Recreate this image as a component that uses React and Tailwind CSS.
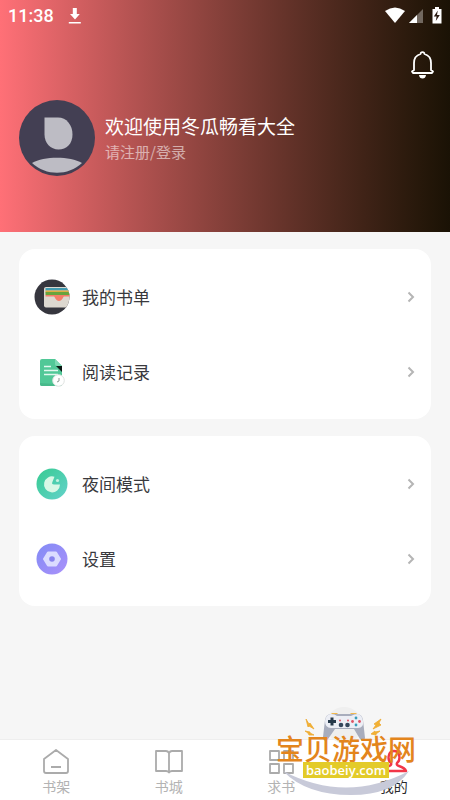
import React from "react";

function StatusBar() {
  return (
    <div className="flex h-8 items-center justify-between pl-2 pr-2">
      <div className="flex items-center gap-3.5">
        <span className="font-[Roboto,sans-serif] text-lg font-medium leading-8">11:38</span>
        <svg width="14" height="18" viewBox="0 0 14 18" fill="#fff" aria-hidden="true">
          <path d="M4.800 1h4v6h3L7 12.500 2 7h2.800zM.8 15h12v1.500H.8z" />
        </svg>
      </div>
      <svg width="57" height="18" viewBox="0 0 57 18" aria-hidden="true">
        <path d="M0 4Q10-3 20 4L10 16z" fill="#fff" />
        <path d="M38 2v14H24z" fill="#fff" opacity=".35" />
        <path d="M32 8v8h-8z" fill="#fff" />
        <path d="M50 0h4v2h2.500v14.500h-9V2H50z" fill="#fff" />
        <path d="M52.800 3.500l-4 6h2.800l-.8 4.500 4-6h-2.800z" fill="#2a1b12" />
      </svg>
    </div>
  );
}

function Avatar() {
  return (
    <svg className="shrink-0" width="76" height="76" viewBox="0 0 76 76" aria-hidden="true">
      <circle cx="38" cy="38" r="38" fill="#433f53" />
      <path d="M25.500 17.500H39C47.500 17.500 53.500 25 53.500 34.500S47.500 49.500 39.500 49.500 25.500 43 25.500 34.500z" fill="#bdbcc4" />
      <path d="M13 63C25 56 51 56 63 63 49 76 27 76 13 63z" fill="#bdbcc4" />
    </svg>
  );
}

function BooklistIcon() {
  return (
    <svg width="36" height="36" viewBox="0 0 36 36" aria-hidden="true">
      <defs>
        <clipPath id="disc"><circle cx="18" cy="18" r="17.500" /></clipPath>
      </defs>
      <circle cx="18" cy="18" r="17.500" fill="#36363e" />
      <g clipPath="url(#disc)">
        <rect x="10" y="8" width="30" height="20.500" rx="2" fill="#ddd8d0" />
        <rect x="11.500" y="9" width="28" height="2.500" fill="#439bb0" />
        <rect x="11.500" y="11.500" width="28" height="2" fill="#dfac43" />
        <rect x="11.500" y="13" width="28" height="3" fill="#67a43d" />
        <path d="M11.500 16h28v1.500H30c-1 0-1.500 4.500-5 4.500s-4-4.500-5-4.500h-8.500z" fill="#f47d68" />
      </g>
    </svg>
  );
}

function HistoryIcon() {
  return (
    <svg width="36" height="36" viewBox="0 0 36 36" aria-hidden="true">
      <path d="M8 5h13l7 7v20H8a2 2 0 0 1-2-2V7a2 2 0 0 1 2-2z" fill="#51c897" />
      <path d="M6 29v1a2 2 0 0 0 2 2h12v-2z" fill="#48b98b" />
      <path d="M22 12h6v6z" fill="#0b1914" />
      <path d="M21 5l7 7h-5a2 2 0 0 1-2-2z" fill="#7dd9b3" />
      <path d="M10 12.500h7M10 16.500h14M10 20.500h14" stroke="#e2f8ef" strokeWidth="1.500" />
      <circle cx="24.500" cy="26.500" r="5.800" fill="#fff" stroke="#dfe3e1" />
      <path d="M25 24v3l-2 1" stroke="#8e9792" fill="none" />
    </svg>
  );
}

function NightIcon() {
  return (
    <svg width="36" height="36" viewBox="0 0 36 36" aria-hidden="true">
      <defs>
        <linearGradient id="night" x2="1" y2="1">
          <stop stopColor="#36cb91" />
          <stop offset="1" stopColor="#64d2cb" />
        </linearGradient>
      </defs>
      <circle cx="18" cy="18" r="15.500" fill="url(#night)" />
      <path d="M20.500 10.800A8 8 0 1 0 26 18.500H20q-2.500 0-1.700-2.200z" fill="#d9f8e6" />
      <circle cx="23.500" cy="14.500" r="1.600" fill="#c3f1df" />
    </svg>
  );
}

function SettingsIcon() {
  return (
    <svg width="36" height="36" viewBox="0 0 36 36" aria-hidden="true">
      <defs>
        <linearGradient id="settings" x2="1" y2="1">
          <stop stopColor="#828bf5" />
          <stop offset="1" stopColor="#aa91fa" />
        </linearGradient>
      </defs>
      <circle cx="18" cy="18" r="15.500" fill="url(#settings)" />
      <path d="M14 11.500h8l4 6.500-4 6.500h-8L10 18z" fill="#dbdcff" stroke="#dbdcff" strokeWidth="2" strokeLinejoin="round" />
      <circle cx="18" cy="18" r="2.800" fill="#8883ee" />
    </svg>
  );
}

function Row({ icon, label }) {
  return (
    <button type="button" className="flex h-[75px] w-full items-center px-[15px] text-left">
      {icon}
      <span className="ml-3 grow text-[17px] leading-6 text-[#39393d]">{label}</span>
      <svg width="10" height="12" viewBox="0 0 10 12" fill="none" stroke="#b5b5b5" strokeWidth="2" aria-hidden="true">
        <path d="M2.500 1.500L7 6l-4.500 4.500" />
      </svg>
    </button>
  );
}

function Tab({ label, active, children }) {
  return (
    <a
      href="#"
      aria-current={active ? "page" : undefined}
      className={"flex flex-1 flex-col items-center pt-2 text-sm leading-5 " + (active ? "text-[#29292b]" : "text-[#b3b3b3]")}
    >
      <svg
        width="28"
        height="28"
        viewBox="0 0 28 28"
        fill="none"
        strokeWidth={active ? 2.4 : 1.8}
        strokeLinejoin="round"
        stroke={active ? "#f23648" : "#ababab"}
        aria-hidden="true"
      >
        {children}
      </svg>
      {label}
    </a>
  );
}

function Watermark() {
  return (
    <div className="pointer-events-none absolute bottom-0 right-8 flex h-[93px] w-[144px] flex-col items-center">
      <svg className="absolute inset-0" width="144" height="93" viewBox="0 0 144 93" aria-hidden="true">
        <circle cx="70" cy="18" r="18" fill="#efefef" />
        <path d="M9 64Q72 97 135 64Q119 88 77 88Q32 88 9 64z" fill="#c8cad9" />
        <path d="M56 8l2-2h5l2 2zM75 8l2-2h5l2 2z" fill="#f1b84d" />
        <path d="M51 13Q52 7 57 7H83Q88 7 89 13L91 31Q90 36 86 32L80 22H61L54 32Q49 36 49 30z" fill="#a8adbd" />
        <path d="M51 14Q52 7 57 7Q61 7 63 9H77Q80 7 84 7Q88 8 89 14Q90 21 84 21H57Q51 21 51 14z" fill="#eceef5" />
        <path d="M58 10.500v8M54 14.500h8" stroke="#26394a" strokeWidth="3" />
        <g fill="#35475c"><circle cx="67" cy="18" r="2.300" /><circle cx="73.500" cy="18" r="2.300" /></g>
        <g fill="#df5364"><circle cx="66" cy="13.500" r="1" /><circle cx="74" cy="13.500" r="1" /><circle cx="78.500" cy="14.500" r="1.400" /><circle cx="85.500" cy="14.500" r="1.400" /></g>
        <g fill="#399db9"><circle cx="82" cy="11" r="1.400" /><circle cx="82" cy="18" r="1.400" /></g>
        <path d="M32 12l3 5 1-1 4 6-5-3-1 1zM31 24l5 1v1l4 2-5 0-1-2zM107 12l-7 5 2 1-3 4 8-4-2-2zM106 24l-5 1v-1l-4 3 5 1v-1z" fill="#f2b133" stroke="#edaa32" strokeWidth=".8" />
      </svg>
      <div className="relative mt-[27px] whitespace-nowrap text-[28px] font-medium leading-7 text-[#e3851d]">宝贝游戏网</div>
      <div className="relative flex h-4 w-[86px] items-center justify-center bg-[#e3cb29] font-['Open_Sans',sans-serif] text-[13px] font-semibold leading-4 text-white">
        baobeiy.com
      </div>
    </div>
  );
}

export default function App() {
  return (
    <div className="relative flex min-h-screen flex-col bg-[#f6f6f6] font-['Noto_Sans_CJK_SC',sans-serif]">
      <header className="h-[232px] bg-linear-to-r from-[#ff7077] to-[#1a1205] text-white">
        <StatusBar />
        <div className="flex justify-end pr-3 pt-[18px]">
          <button type="button" aria-label="通知" className="block">
            <svg width="32" height="30" viewBox="0 0 32 30" fill="none" stroke="#fff" strokeWidth="1.800" strokeLinejoin="round" aria-hidden="true">
              <path d="M8 20v-7c0-5 3-8 6.500-9 .2-2.500 3.800-2.500 4 0C22 5 25 8 25 13v7l2 1.500-1 1.500H7l-1-1.500z" />
              <path d="M13 25h7q-.5 3.500-3.500 3.500T13 25z" fill="#fff" stroke="none" />
            </svg>
          </button>
        </div>
        <div className="mt-5 flex items-center gap-[10px] pl-[19px]">
          <Avatar />
          <div>
            <h1 className="text-[19px] font-normal leading-7">欢迎使用冬瓜畅看大全</h1>
            <a href="#" className="block text-[15px] leading-6 text-white/55">请注册/登录</a>
          </div>
        </div>
      </header>
      <main className="flex grow flex-col gap-[17px] px-[19px] py-[17px]">
        <section className="rounded-2xl bg-white py-[10px]">
          <Row icon={<BooklistIcon />} label="我的书单" />
          <Row icon={<HistoryIcon />} label="阅读记录" />
        </section>
        <section className="rounded-2xl bg-white py-[10px]">
          <Row icon={<NightIcon />} label="夜间模式" />
          <Row icon={<SettingsIcon />} label="设置" />
        </section>
      </main>
      <nav className="flex h-[61px] border-t border-[#eeeeee] bg-white">
        <Tab label="书架">
          <path d="M2 11L14 2l12 9v12q0 2-2 2H4q-2 0-2-2zM9 19h10" />
        </Tab>
        <Tab label="书城">
          <path d="M14 5q-1-2-3-2H1v20h10q2 0 3 1.500Q15 23 17 23h10V3H17q-2 0-3 2zv19" />
        </Tab>
        <Tab label="求书">
          <path d="M3 3h9v9H3zM17 3h9v9h-9zM3 16h9v9H3zM17 16h9v9h-9z" />
        </Tab>
        <Tab label="我的" active>
          <path d="M11 15C7 12 8 3 14 3s7 9 3 12q-1 2 2 3 6 2 7 5H2q1-3 7-5 3-1 2-3z" />
        </Tab>
      </nav>
      <Watermark />
    </div>
  );
}
